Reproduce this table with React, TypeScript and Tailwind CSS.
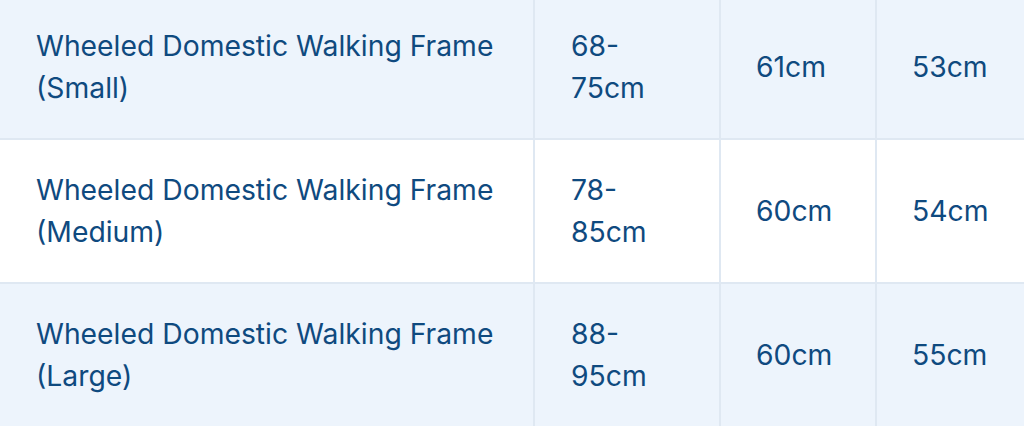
const rows = [
  { name: 'Wheeled Domestic Walking Frame (Small)', height: '68-75cm', width: '61cm', depth: '53cm' },
  { name: 'Wheeled Domestic Walking Frame (Medium)', height: '78-85cm', width: '60cm', depth: '54cm' },
  { name: 'Wheeled Domestic Walking Frame (Large)', height: '88-95cm', width: '60cm', depth: '55cm' },
];

export default function App() {
  return (
    <div className="w-[1024px] h-[426px] overflow-hidden bg-white">
      <div
        className="-mt-1 text-[28.3px] leading-[42px] text-[#0f4a7f]"
        style={{ fontFamily: 'Inter, "Liberation Sans", sans-serif' }}
      >
        {rows.map((row, i) => (
          <div
            key={i}
            className={`grid grid-cols-[533px_186px_156px_1fr] h-[144px] border-b-2 border-[#dfe8f2] ${
              i % 2 === 0 ? 'bg-[#edf4fc]' : 'bg-white'
            }`}
          >
            <div className="flex items-center pl-[36px] pr-6">
              <span className="max-w-[470px]">{row.name}</span>
            </div>
            <div className="flex items-center border-l-2 border-[#dfe8f2] pl-[36px]">
              <span className="max-w-[80px]">{row.height}</span>
            </div>
            <div className="flex items-center border-l-2 border-[#dfe8f2] pl-[35px]">
              {row.width}
            </div>
            <div className="flex items-center border-l-2 border-[#dfe8f2] pl-[35px]">
              {row.depth}
            </div>
          </div>
        ))}
      </div>
    </div>
  );
}
